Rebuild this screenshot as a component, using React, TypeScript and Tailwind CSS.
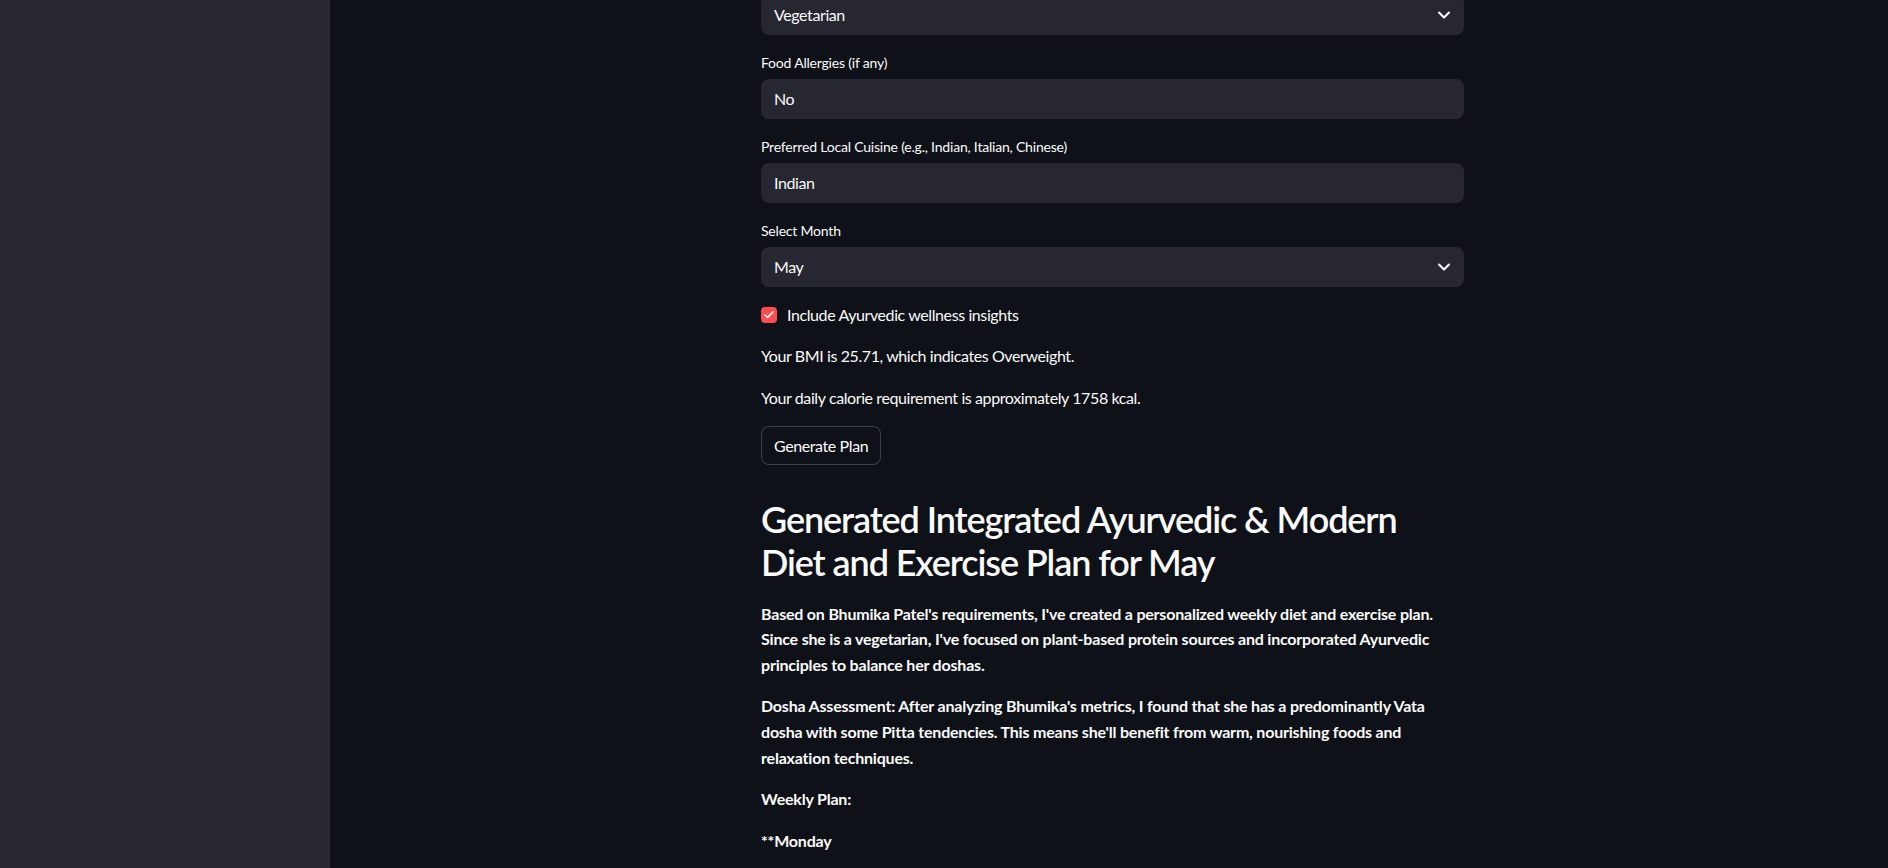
import { Check, ChevronDown } from "lucide-react";

function FieldLabel({ children }: { children: string }) {
  return <div className="h-[28px] text-[14px] leading-[24px] tracking-[-0.2px]">{children}</div>;
}

function TextBox({ value }: { value: string }) {
  return (
    <div className="flex h-[40px] items-center rounded-[8px] bg-[#262730] px-[13px] text-[16px] tracking-[-0.4px]">
      {value}
    </div>
  );
}

function SelectBox({ value }: { value: string }) {
  return (
    <div className="flex h-[40px] items-center justify-between rounded-[8px] bg-[#262730] pl-[13px] pr-[10px] text-[16px] tracking-[-0.4px]">
      <span>{value}</span>
      <ChevronDown size={20} strokeWidth={2.5} className="text-[#fafafa]" />
    </div>
  );
}

export default function App() {
  return (
    <div className="flex h-[868px] overflow-hidden bg-[#0e1117] font-['Lato',sans-serif] text-[#fafafa]">
      <aside className="w-[330px] shrink-0 bg-[#262730]" />

      <main className="flex-1 pl-[431px]">
        <div className="-mt-[5px] flex w-[703px] flex-col gap-4">
          <SelectBox value="Vegetarian" />

          <div>
            <FieldLabel>Food Allergies (if any)</FieldLabel>
            <TextBox value="No" />
          </div>

          <div>
            <FieldLabel>Preferred Local Cuisine (e.g., Indian, Italian, Chinese)</FieldLabel>
            <TextBox value="Indian" />
          </div>

          <div>
            <FieldLabel>Select Month</FieldLabel>
            <SelectBox value="May" />
          </div>

          <label className="flex h-[24px] items-center gap-[10px] text-[16px] tracking-[-0.4px]">
            <span className="flex h-[16px] w-[16px] items-center justify-center rounded-[4px] bg-[#ff4b4b]">
              <Check size={12} strokeWidth={3.5} className="text-white" />
            </span>
            Include Ayurvedic wellness insights
          </label>

          <p className="text-[16px] leading-[25.6px] tracking-[-0.4px]">
            Your BMI is 25.71, which indicates Overweight.
          </p>
          <p className="text-[16px] leading-[25.6px] tracking-[-0.4px]">
            Your daily calorie requirement is approximately 1758 kcal.
          </p>

          <button className="flex h-[39px] items-center self-start rounded-[8px] border border-[rgba(250,250,250,0.2)] bg-[#0e1117] px-3 text-[16px] tracking-[-0.4px]">
            Generate Plan
          </button>

          <h2 className="pt-[17px] text-[36px] font-semibold leading-[43.2px] tracking-[-1.1px]">
            Generated Integrated Ayurvedic &amp; Modern
            <br />
            Diet and Exercise Plan for May
          </h2>

          <p className="text-[16px] font-bold leading-[25.6px] tracking-[-0.2px]">
            Based on Bhumika Patel's requirements, I've created a personalized weekly diet and exercise plan.
            <br />
            Since she is a vegetarian, I've focused on plant-based protein sources and incorporated Ayurvedic
            <br />
            principles to balance her doshas.
          </p>

          <p className="text-[16px] font-bold leading-[25.6px] tracking-[-0.2px]">
            Dosha Assessment: After analyzing Bhumika's metrics, I found that she has a predominantly Vata
            <br />
            dosha with some Pitta tendencies. This means she'll benefit from warm, nourishing foods and
            <br />
            relaxation techniques.
          </p>

          <p className="text-[16px] font-bold leading-[25.6px] tracking-[-0.2px]">Weekly Plan:</p>

          <p className="text-[16px] font-bold leading-[25.6px] tracking-[-0.2px]">**Monday</p>
        </div>
      </main>
    </div>
  );
}
